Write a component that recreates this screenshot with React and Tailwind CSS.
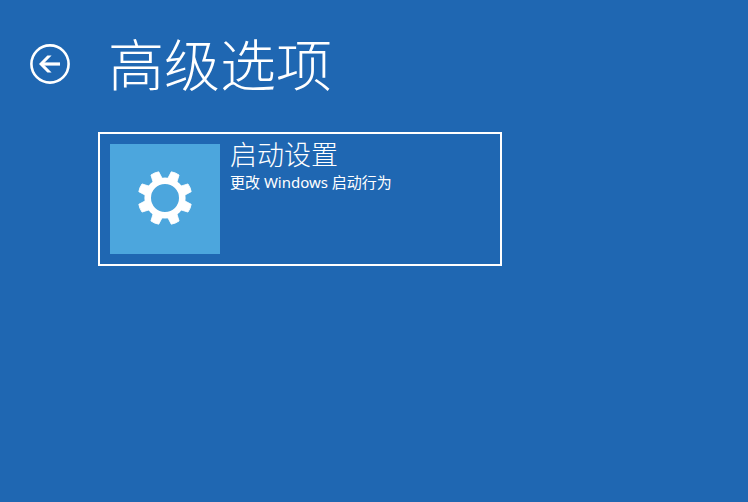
const TOOTH_ANGLES = [22.5, 67.5, 112.5, 157.5, 202.5, 247.5, 292.5, 337.5]

const options = [
  {
    id: 'startup-settings',
    title: '启动设置',
    description: '更改 Windows 启动行为',
    icon: GearIcon,
  },
]

function BackIcon() {
  return (
    <svg viewBox="0 0 40 40" className="size-10" fill="none" stroke="currentColor" aria-hidden="true">
      <circle cx="20" cy="20" r="18.6" strokeWidth="2.6" />
      <path d="M11 20H30" strokeWidth="3.2" />
      <path d="M9 20L17.4 11.4H21.6L13.2 20L21.6 28.6H17.4Z" fill="currentColor" stroke="none" />
    </svg>
  )
}

function GearIcon() {
  return (
    <svg viewBox="-28 -27 56 56" className="size-14" aria-hidden="true">
      <circle r="17.3" fill="none" stroke="currentColor" strokeWidth="6.6" />
      {TOOTH_ANGLES.map((angle) => (
        <path
          key={angle}
          d="M-5 -18L-4.2 -26.6Q0 -27.6 4.2 -26.6L5 -18Z"
          transform={`rotate(${angle})`}
          fill="currentColor"
          stroke="currentColor"
          strokeWidth="0.8"
          strokeLinejoin="round"
        />
      ))}
    </svg>
  )
}

function OptionTile({ title, description, icon: Icon }) {
  return (
    <button
      type="button"
      className="flex w-full max-w-[404px] items-start gap-2.5 border-2 border-white p-2.5 text-left outline-none"
    >
      <span className="flex size-[110px] shrink-0 items-center justify-center bg-[#4ca6dd]">
        <Icon />
      </span>
      <span className="flex flex-col">
        <span className="text-[27px] leading-[22px] font-light">{title}</span>
        <span className="mt-1 text-[15px] leading-6">{description}</span>
      </span>
    </button>
  )
}

export default function App() {
  return (
    <div
      lang="zh-CN"
      className="min-h-screen bg-[#1f67b2] px-7.5 pt-8 font-['Noto_Sans','Noto_Sans_CJK_SC',sans-serif] text-white"
    >
      <header className="flex items-center gap-[38px]">
        <button type="button" aria-label="返回" className="shrink-0">
          <BackIcon />
        </button>
        <h1 className="text-[56px] leading-16 font-light">高级选项</h1>
      </header>

      <main className="mt-9 flex flex-col gap-4 pl-17">
        {options.map((option) => (
          <OptionTile key={option.id} {...option} />
        ))}
      </main>
    </div>
  )
}
